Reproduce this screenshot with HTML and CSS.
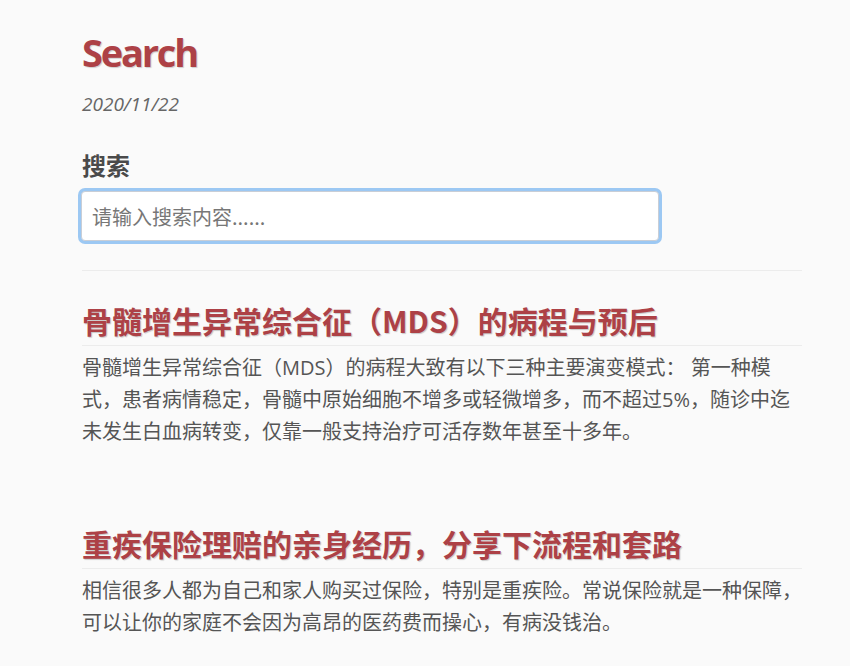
FILE: index.html
```html
<!DOCTYPE html>
<html lang="zh-CN">
<head>
<meta charset="utf-8">
<title>Search</title>
<link rel="stylesheet" href="styles.css">
</head>
<body>
<main class="page">
  <h1 class="page-title">Search</h1>
  <div class="page-date">2020/11/22</div>
  <h3 class="search-label">搜索</h3>
  <input class="search-input" type="text" placeholder="请输入搜索内容......">
  <hr class="divider">
  <article class="result">
    <h2 class="result-title">骨髓增生异常综合征（MDS）的病程与预后</h2>
    <p class="result-text">骨髓增生异常综合征（MDS）的病程大致有以下三种主要演变模式： 第一种模式，患者病情稳定，骨髓中原始细胞不增多或轻微增多，而不超过5%，随诊中迄未发生白血病转变，仅靠一般支持治疗可活存数年甚至十多年。</p>
  </article>
  <article class="result">
    <h2 class="result-title">重疾保险理赔的亲身经历，分享下流程和套路</h2>
    <p class="result-text">相信很多人都为自己和家人购买过保险，特别是重疾险。常说保险就是一种保障，可以让你的家庭不会因为高昂的医药费而操心，有病没钱治。</p>
  </article>
</main>
</body>
</html>
```

FILE: styles.css
```css
html, body {
  margin: 0;
  padding: 0;
  background: #fafafa;
}
body {
  font-family: "Open Sans", "Noto Sans CJK SC", sans-serif;
  color: #555;
}
.page {
  width: 720px;
  margin-left: 82px;
  padding-top: 28px;
}
.page-title {
  margin: 0;
  font-family: "Open Sans", sans-serif;
  font-size: 38px;
  line-height: 48px;
  font-weight: 700;
  letter-spacing: -2.2px;
  color: #ad4146;
  text-shadow: 1px 1px 1px rgba(0, 0, 0, 0.18);
}
.page-date {
  margin-top: 14px;
  font-size: 19px;
  line-height: 28px;
  font-style: italic;
  color: #666;
}
.search-label {
  margin: 32px 0 0;
  font-family: "Noto Sans CJK SC", sans-serif;
  font-size: 24px;
  line-height: 30px;
  font-weight: 700;
  color: #4a4a4a;
}
.search-input {
  display: block;
  box-sizing: border-box;
  margin-top: 11px;
  margin-left: -1px;
  width: 578px;
  height: 50px;
  padding: 0 10px;
  border: 1px solid #c9ced6;
  border-radius: 4px;
  background: #fff;
  box-shadow: 0 0 0 3px #9cc8f3;
  outline: none;
  font-family: "Noto Sans CJK SC", sans-serif;
  font-size: 20px;
  color: #555;
}
.search-input::placeholder {
  color: #777;
}
.divider {
  margin: 29px 0 0;
  border: 0;
  border-top: 1px solid #ececec;
  height: 0;
}
.result {
  margin-bottom: 75px;
}
.result-title {
  margin: 29px 0 0;
  padding-bottom: 5px;
  border-bottom: 1px solid #ececec;
  font-family: "Noto Sans CJK SC", sans-serif;
  font-size: 30px;
  line-height: 40px;
  font-weight: 700;
  color: #ad4146;
  text-shadow: 1px 1px 1px rgba(0, 0, 0, 0.2);
}
.result + .result .result-title {
  margin-top: 0;
}
.result-text {
  margin: 6px 0 0;
  font-size: 20px;
  line-height: 32px;
  color: #555;
}
```
